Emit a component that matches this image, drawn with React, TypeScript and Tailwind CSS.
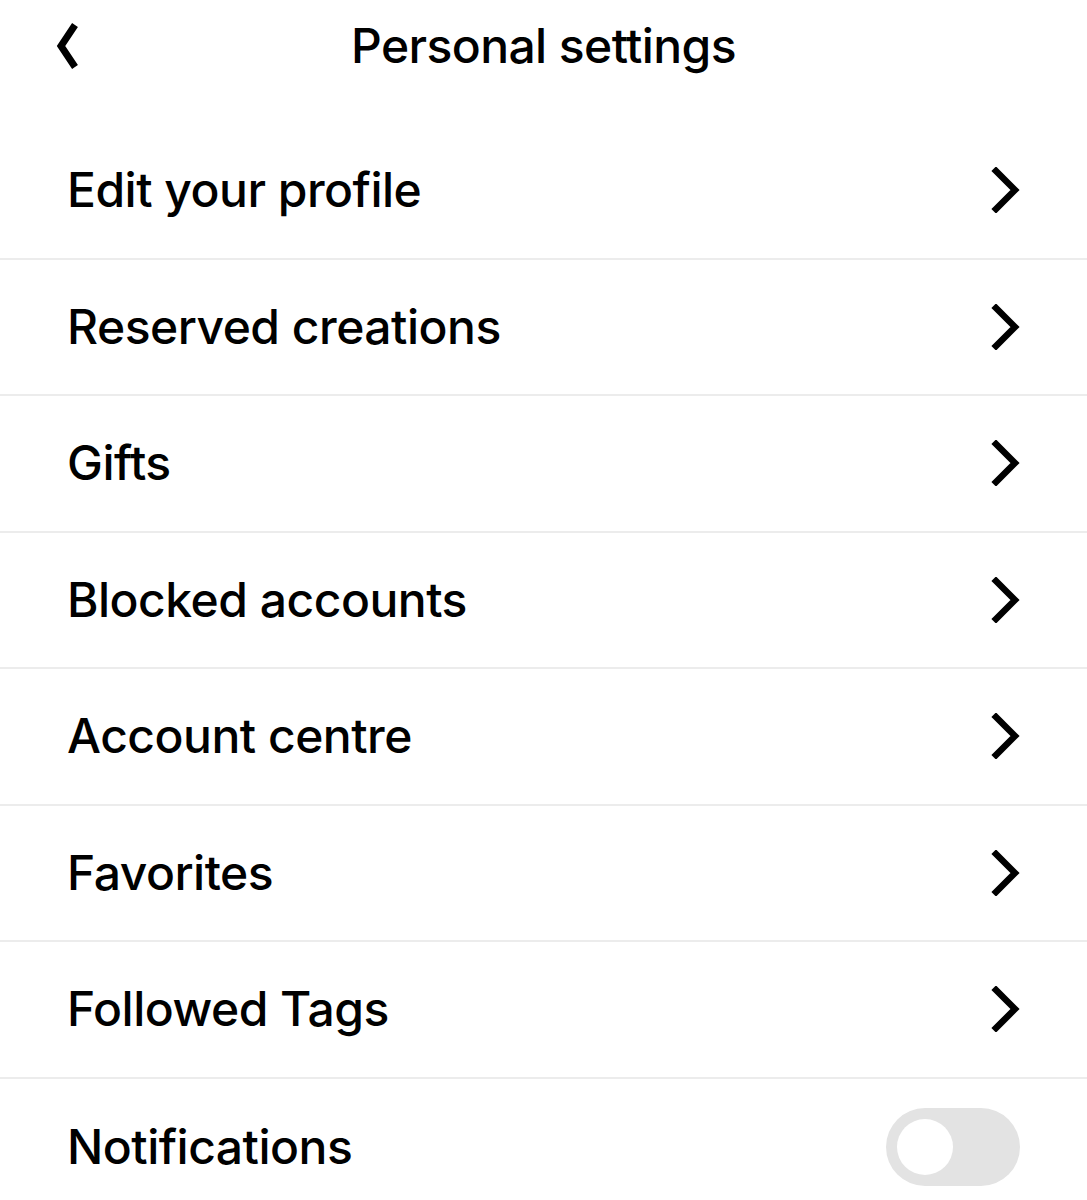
const ROWS = [
  'Edit your profile',
  'Reserved creations',
  'Gifts',
  'Blocked accounts',
  'Account centre',
  'Favorites',
  'Followed Tags',
];

function ChevronRight() {
  return (
    <svg className="h-[46px] w-[30px] shrink-0" viewBox="0 0 30 46" fill="none" aria-hidden="true">
      <path d="M5 4 L24 23 L5 42" stroke="#000" strokeWidth="6.5" strokeLinecap="square" strokeLinejoin="miter" />
    </svg>
  );
}

function ChevronLeft() {
  return (
    <svg className="h-[48px] w-[24px] max-w-none" viewBox="0 0 24 48" fill="none" aria-hidden="true">
      <path d="M19 3 L5 24 L19 45" stroke="#000" strokeWidth="7" strokeLinecap="butt" strokeLinejoin="miter" />
    </svg>
  );
}

export default function App() {
  return (
    <div className="min-h-[1200px] w-[1087px] overflow-hidden bg-white text-black" style={{ fontFamily: 'Inter, "Noto Sans", sans-serif' }}>
      <header className="relative flex h-[123px] items-start justify-center pt-[17px]">
        <button type="button" className="absolute left-[56px] top-[22px] block w-[24px]" aria-label="Back">
          <ChevronLeft />
        </button>
        <h1 className="text-[48px] font-medium leading-[58px] tracking-[-0.6px]">Personal settings</h1>
      </header>
      <ul>
        {ROWS.map((label) => (
          <li key={label} className="flex h-[136.5px] items-center justify-between border-b-2 border-[#ececec] pl-[67px] pr-[66px]">
            <span className="text-[48px] font-[550] tracking-[-0.5px]">{label}</span>
            <ChevronRight />
          </li>
        ))}
        <li className="flex h-[136.5px] items-center justify-between pl-[67px] pr-[67px]">
          <span className="text-[48px] font-[550] tracking-[-0.5px]">Notifications</span>
          <div className="flex h-[78px] w-[134px] items-center rounded-full bg-[#e3e3e3] px-[11px]">
            <div className="h-[56px] w-[56px] rounded-full bg-white" />
          </div>
        </li>
      </ul>
    </div>
  );
}
